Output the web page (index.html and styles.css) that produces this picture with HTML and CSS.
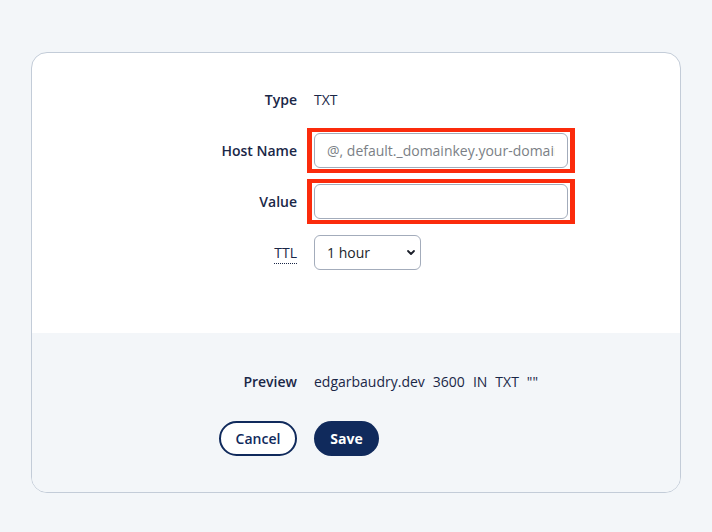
FILE: index.html
```html
<!DOCTYPE html>
<html lang="en">
<head>
    <meta charset="UTF-8">
    <meta name="viewport" content="width=device-width, initial-scale=1.0">
    <title>Edit DNS record</title>
    <link rel="stylesheet" href="styles.css">
</head>
<body>

<!-- Record editor card -->
<form class="record-card">
  <div class="record-fields">
    <span class="field-label">Type</span>
    <span class="field-value">TXT</span>

    <label class="field-label" for="hostName">Host Name</label>
    <span class="marked">
      <input class="text-input" id="hostName" type="text" placeholder="@, default._domainkey.your-domain.com">
    </span>

    <label class="field-label" for="recordValue">Value</label>
    <span class="marked">
      <input class="text-input" id="recordValue" type="text">
    </span>

    <label class="field-label" for="ttl"><abbr title="Time to live">TTL</abbr></label>
    <span class="select-wrap">
      <select class="select-input" id="ttl">
        <option>1 hour</option>
        <option>1 day</option>
      </select>
      <svg class="select-chevron" width="10" height="7" viewBox="0 0 10 7" aria-hidden="true">
        <path d="M2 2 L5 5 L8 2" fill="none" stroke="#1b1f2a" stroke-width="1.8" stroke-linecap="round" stroke-linejoin="round"/>
      </svg>
    </span>
  </div>

  <div class="record-footer">
    <div class="preview-row">
      <span class="field-label">Preview</span>
      <span class="preview-text">
        <span>edgarbaudry.dev</span>
        <span>3600</span>
        <span>IN</span>
        <span>TXT</span>
        <span>""</span>
      </span>
    </div>
    <div class="actions">
      <button class="btn btn-outline" type="button">Cancel</button>
      <button class="btn btn-solid" type="submit">Save</button>
    </div>
  </div>
</form>

</body>
</html>
```

FILE: styles.css
```css
html, body {
  margin: 0;
  background: #f3f6f9;
  font-family: 'Open Sans', 'Noto Sans', sans-serif;
  color: #1a2747;
  -webkit-font-smoothing: antialiased;
}

body {
  padding: 52px 31px 38px;
}

/* Card */
.record-card {
  box-sizing: border-box;
  width: 650px;
  border: 1px solid #c3ccd8;
  border-radius: 16px;
  overflow: hidden;
  background: #fff;
}

.record-fields,
.preview-row,
.actions {
  display: grid;
  grid-template-columns: 265px 1fr;
  column-gap: 17px;
  align-items: center;
}

.record-fields {
  padding: 29px 0 63px;
  row-gap: 16px;
  grid-auto-rows: 35px;
}

.field-label {
  text-align: right;
  font-size: 14px;
  font-weight: 600;
  color: #1a2747;
}

.field-label abbr {
  font-weight: 400;
  text-decoration: none;
  border-bottom: 1px dotted #1a2747;
  padding-bottom: 1px;
}

.field-value {
  font-size: 14px;
}

/* Inputs */
.text-input,
.select-input {
  box-sizing: border-box;
  height: 35px;
  border: 1px solid #a3acbb;
  border-radius: 6px;
  font-family: inherit;
  font-size: 14px;
  color: #1b1f2a;
  background: #fff;
}

.text-input {
  width: 254px;
  padding: 0 12px;
}

.text-input::placeholder {
  color: #7b7f86;
}

/* red highlight round a field */
.marked {
  display: inline-block;
  justify-self: start;
  border: solid #fb2b0c;
  border-width: 4px 5px;
  padding: 1px 2px;
  margin: -5px -7px;
  line-height: 0;
}

.select-wrap {
  position: relative;
  justify-self: start;
  line-height: 0;
}

.select-input {
  appearance: none;
  width: 107px;
  padding: 0 24px 0 12px;
}

.select-chevron {
  position: absolute;
  right: 5px;
  top: 14px;
  pointer-events: none;
}

/* Footer */
.record-footer {
  background: #f3f6f9;
  padding: 39px 0 36px;
}

.preview-row {
  line-height: 20px;
}

.preview-text {
  display: flex;
  gap: 8px;
  font-size: 14px;
  color: #1a2747;
}

.actions {
  margin-top: 29px;
}

.btn {
  height: 35px;
  border-radius: 18px;
  font-family: inherit;
  font-size: 14px;
  font-weight: 700;
  cursor: pointer;
}

.btn-outline {
  justify-self: end;
  width: 78px;
  border: 2px solid #102a5c;
  background: #fff;
  color: #102a5c;
  font-weight: 600;
}

.btn-solid {
  justify-self: start;
  width: 65px;
  border: none;
  background: #102a5c;
  color: #fff;
}
```
